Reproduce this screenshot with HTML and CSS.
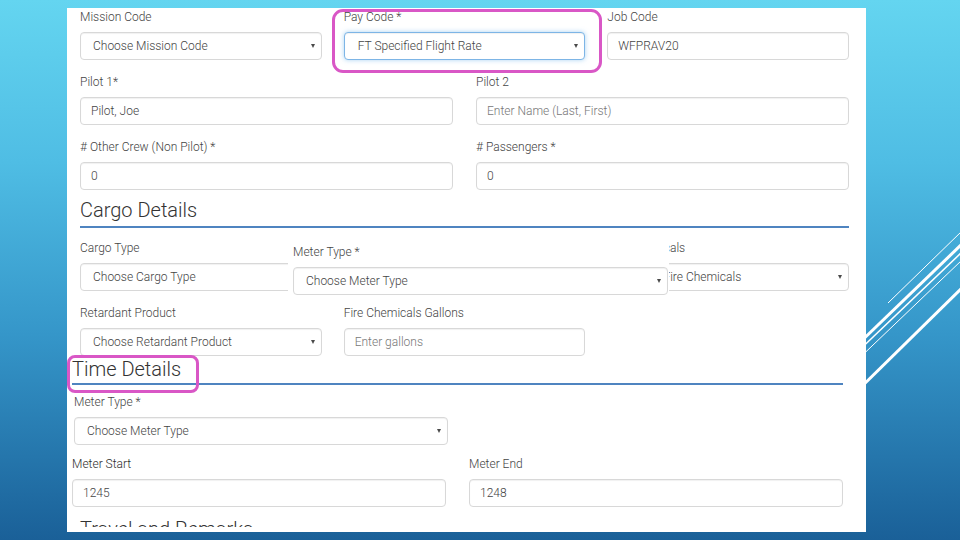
FILE: index.html
```html
<!DOCTYPE html>
<html lang="en">
<head>
    <meta charset="UTF-8">
    <meta name="viewport" content="width=device-width, initial-scale=1.0">
    <title>Flight Log - Details</title>
    <link rel="stylesheet" href="styles.css">
</head>
<body>
    <svg class="deco" width="960" height="540" viewBox="0 0 960 540">
        <line x1="888" y1="303" x2="962" y2="231" stroke="#fff" stroke-width="1"/>
        <line x1="850" y1="352" x2="962" y2="244" stroke="#fff" stroke-width="3"/>
        <line x1="850" y1="359" x2="962" y2="252" stroke="#fff" stroke-width="1.5"/>
        <line x1="850" y1="367" x2="962" y2="260" stroke="#fff" stroke-width="1"/>
        <line x1="850" y1="398" x2="962" y2="288" stroke="#fff" stroke-width="3"/>
    </svg>

    <div class="panel">
        <section class="sec sec-top">
            <div class="rows">
                <div class="row row-3">
                    <div class="group">
                        <label>Mission Code</label>
                        <div class="field select"><span>Choose Mission Code</span><span class="caret"></span></div>
                    </div>
                    <div class="group">
                        <label>Pay Code *</label>
                        <div class="field select focus"><span>FT Specified Flight Rate</span><span class="caret"></span></div>
                    </div>
                    <div class="group">
                        <label>Job Code</label>
                        <div class="field input"><span>WFPRAV20</span></div>
                    </div>
                </div>
                <div class="row row-2">
                    <div class="group">
                        <label>Pilot 1*</label>
                        <div class="field input"><span>Pilot, Joe</span></div>
                    </div>
                    <div class="group">
                        <label>Pilot 2</label>
                        <div class="field input"><span class="placeholder">Enter Name (Last, First)</span></div>
                    </div>
                </div>
                <div class="row row-2">
                    <div class="group">
                        <label># Other Crew (Non Pilot) *</label>
                        <div class="field input"><span>0</span></div>
                    </div>
                    <div class="group">
                        <label># Passengers *</label>
                        <div class="field input"><span>0</span></div>
                    </div>
                </div>
            </div>

            <h2 class="section-title">Cargo Details</h2>

            <div class="rows rows-cargo">
                <div class="row row-3">
                    <div class="group">
                        <label>Cargo Type</label>
                        <div class="field select"><span>Choose Cargo Type</span><span class="caret"></span></div>
                    </div>
                    <div class="group">
                        <label>Cargo Weight</label>
                        <div class="field input"><span class="placeholder">Enter weight</span></div>
                    </div>
                    <div class="group">
                        <label>Fire Chemicals</label>
                        <div class="field select"><span>Choose Fire Chemicals</span><span class="caret"></span></div>
                    </div>
                </div>
                <div class="row row-3">
                    <div class="group">
                        <label>Retardant Product</label>
                        <div class="field select"><span>Choose Retardant Product</span><span class="caret"></span></div>
                    </div>
                    <div class="group">
                        <label>Fire Chemicals Gallons</label>
                        <div class="field input"><span class="placeholder">Enter gallons</span></div>
                    </div>
                    <div></div>
                </div>
            </div>
        </section>

        <section class="sec sec-time">
            <h2 class="section-title title-time">Time Details</h2>

            <div class="group group-meter">
                <label>Meter Type *</label>
                <div class="field select"><span>Choose Meter Type</span><span class="caret"></span></div>
            </div>

            <div class="row row-2 row-meter">
                <div class="group">
                    <label class="dark">Meter Start</label>
                    <div class="field input"><span>1245</span></div>
                </div>
                <div class="group">
                    <label>Meter End</label>
                    <div class="field input"><span>1248</span></div>
                </div>
            </div>

            <h2 class="section-title title-next">Travel and Remarks</h2>
        </section>

        <!-- pasted snippet over the cargo row -->
        <div class="paste">
            <label>Meter Type *</label>
            <div class="field select"><span>Choose Meter Type</span><span class="caret"></span></div>
        </div>

        <div class="mark mark-pay"></div>
        <div class="mark mark-time"></div>
    </div>
</body>
</html>
```

FILE: styles.css
```css
html, body {
    margin: 0;
    height: 540px;
    overflow: hidden;
}

body {
    font-family: Roboto, "Liberation Sans", sans-serif;
    background: linear-gradient(180deg, #64d5f0 0%, #4fbde4 30%, #3596c9 62%, #1a6098 100%);
    padding: 8px 0 0 67px;
    box-sizing: border-box;
    position: relative;
}

.deco {
    position: absolute;
    top: 0;
    left: 0;
}

.panel {
    position: relative;
    z-index: 1;
    width: 799px;
    height: 524px;
    background: #fff;
    overflow: hidden;
}

.sec-top {
    padding: 2px 17px 0 13px;
}

.sec-time {
    padding: 1px 23px 0 5px;
    height: 171px;
    box-sizing: border-box;
    overflow: hidden;
}

.rows {
    display: grid;
    row-gap: 15px;
}

.rows-cargo {
    margin-top: 13px;
}

.row {
    display: grid;
}

.row-3 {
    grid-template-columns: repeat(3, 1fr);
    column-gap: 22px;
}

.row-2 {
    grid-template-columns: repeat(2, 1fr);
    column-gap: 23px;
}

label {
    display: block;
    font-size: 12px;
    line-height: 14px;
    font-weight: 300;
    color: #444;
    margin-bottom: 8px;
    white-space: nowrap;
}

label.dark {
    color: #2e2e2e;
}

.field {
    height: 28px;
    box-sizing: border-box;
    border: 1px solid #d8d8d8;
    border-radius: 4px;
    box-shadow: inset 0 1px 1px rgba(0, 0, 0, 0.06);
    display: flex;
    align-items: center;
    font-size: 12px;
    font-weight: 300;
    color: #444;
    background: #fff;
    white-space: nowrap;
    overflow: hidden;
}

.field.select {
    padding: 0 6px 0 12px;
}

.field.input {
    padding: 0 10px;
}

.field.focus {
    border-color: #7db5e6;
    box-shadow: inset 0 1px 1px rgba(0, 0, 0, 0.06), 0 0 5px rgba(102, 175, 233, 0.55);
    padding-left: 13px;
}

.placeholder {
    color: #777;
}

.caret {
    margin-left: auto;
    width: 0;
    height: 0;
    border-left: 2.5px solid transparent;
    border-right: 2.5px solid transparent;
    border-top: 4px solid #4a4a4a;
}

.section-title {
    font-size: 20px;
    line-height: 24px;
    font-weight: 300;
    color: #333;
    margin: 8px 0 0;
    padding-bottom: 4px;
    border-bottom: 2px solid #4f84c0;
}

.title-time {
    margin-top: 0;
    padding-bottom: 2px;
}

.title-next {
    border-bottom: none;
    margin-top: 10px;
    padding-left: 8px;
}

.group-meter {
    margin: 10px 0 0 2px;
    width: 374px;
}

.row-meter {
    margin-top: 12px;
}

.paste {
    position: absolute;
    left: 221px;
    top: 230px;
    width: 381px;
    box-sizing: border-box;
    padding: 7px 1px 6px 5px;
    background: #fff;
}

.paste label {
    margin-bottom: 8px;
}

.mark {
    position: absolute;
    border: 3px solid #d957c6;
    box-sizing: border-box;
}

.mark-pay {
    left: 265px;
    top: 1px;
    width: 270px;
    height: 64px;
    border-radius: 11px;
}

.mark-time {
    left: 0;
    top: 347px;
    width: 132px;
    height: 38px;
    border-radius: 8px;
}
```
